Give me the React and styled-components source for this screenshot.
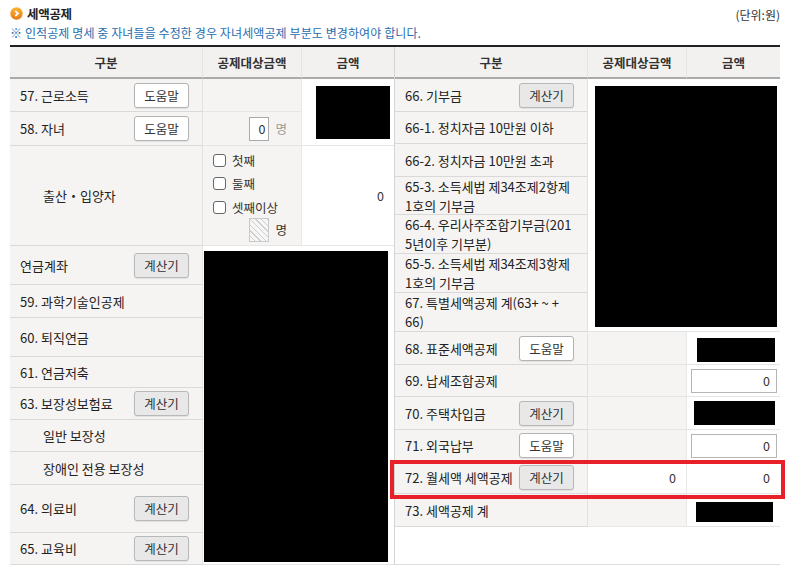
import styled, { createGlobalStyle } from "styled-components";

const GlobalStyle = createGlobalStyle`
  body {
    margin: 0;
    background: #fff;
    font-family: "Noto Sans CJK KR", "Noto Sans", sans-serif;
    color: #222;
  }
`;

const Page = styled.div`
  width: 789px;
  padding: 0 9px 0 10px;
  box-sizing: border-box;
`;

const TitleBar = styled.div`
  height: 26px;
  display: flex;
  align-items: center;
  justify-content: space-between;
`;

const Title = styled.h2`
  margin: 0;
  display: flex;
  align-items: center;
  gap: 4px;
  font-size: 12.5px;
  font-weight: 700;
  letter-spacing: -0.3px;
  color: #222;
`;

const Unit = styled.span`
  font-size: 12px;
  color: #333;
  padding-top: 2px;
`;

const Note = styled.p`
  margin: 0 0 5px;
  font-size: 12px;
  line-height: 14px;
  letter-spacing: 0.1px;
  color: #1f6db0;
`;

const Board = styled.div`
  display: flex;
  align-items: stretch;
  border-top: 2px solid #222;
`;

const Half = styled.div`
  display: grid;
  grid-template-columns: ${(p) => p.$cols};
  grid-template-rows: ${(p) => p.$rows};
  border-right: ${(p) => (p.$divider ? "1px solid #d4d4d4" : "none")};
`;

const HeadCell = styled.div`
  display: flex;
  align-items: center;
  justify-content: center;
  background: #f3f1ef;
  border-bottom: 2px solid #aaa;
  border-right: ${(p) => (p.$last ? "none" : "1px solid #e6e4e2")};
  font-size: 12.5px;
  font-weight: 700;
  color: #333;
  box-sizing: border-box;
`;

const LabelCell = styled.div`
  position: relative;
  display: flex;
  align-items: center;
  justify-content: space-between;
  padding: 0 13px 0 ${(p) => (p.$indent ? "33px" : "10px")};
  background: #f5f4f2;
  border-bottom: 1px solid #d9d9d9;
  border-right: 1px solid #e4e2e0;
  font-size: 13px;
  line-height: 19px;
  color: #222;
  box-sizing: border-box;
`;

const ValueCell = styled.div`
  display: flex;
  align-items: ${(p) => (p.$top ? "flex-start" : "center")};
  justify-content: ${(p) => p.$justify || "flex-end"};
  padding: ${(p) => p.$pad || "0 10px 0 0"};
  grid-row: span ${(p) => p.$rowSpan || 1};
  grid-column: span ${(p) => p.$colSpan || 1};
  background: ${(p) => (p.$tone === "gray" ? "#f5f4f2" : "#fff")};
  border-bottom: 1px solid #e6e6e6;
  border-right: ${(p) => (p.$last ? "none" : "1px solid #e8e8e8")};
  font-size: 12.5px;
  color: #333;
  box-sizing: border-box;
`;

const Filler = styled.div`
  grid-column: 1 / -1;
  background: #fff;
  border-bottom: 1px solid #dddddd;
`;

const Redacted = styled.div`
  width: ${(p) => p.$w}px;
  height: ${(p) => p.$h}px;
  background: #000;
  flex: none;
`;

const Btn = styled.button`
  width: 55px;
  height: 25px;
  flex: none;
  padding: 0;
  border: 1px solid ${(p) => (p.$calc ? "#b8b8b8" : "#b3b3b3")};
  border-radius: 3px;
  background: ${(p) => (p.$calc ? "#e8e8e8" : "#fff")};
  box-shadow: 0 1px 1px rgba(0, 0, 0, 0.08);
  font-family: inherit;
  font-size: 12.5px;
  color: #333;
`;

const InputGroup = styled.div`
  display: flex;
  align-items: center;
  gap: 6px;
  color: ${(p) => (p.$muted ? "#999" : "#333")};
  font-size: 12.5px;
`;

const SmallInput = styled.div`
  width: 20px;
  height: 24px;
  box-sizing: border-box;
  border: 1px solid ${(p) => (p.$disabled ? "#c9c9c9" : "#a9a9a9")};
  background: ${(p) =>
    p.$disabled
      ? "repeating-linear-gradient(45deg, #f6f6f6 0 3px, #cfcfcf 3px 4px)"
      : "#fff"};
  display: flex;
  align-items: center;
  justify-content: flex-end;
  padding-right: 3px;
  color: #333;
`;

const WideInput = styled.div`
  width: 86px;
  height: 24px;
  box-sizing: border-box;
  border: 1px solid #b5b5b5;
  background: #fff;
  display: flex;
  align-items: center;
  justify-content: flex-end;
  padding-right: 6px;
  font-size: 12.5px;
  color: #333;
`;

const BirthBox = styled.div`
  width: 100%;
  display: flex;
  flex-direction: column;
  padding-top: 3px;
`;

const CheckRow = styled.label`
  height: 23.3px;
  display: flex;
  align-items: center;
  gap: 6px;
  font-size: 12.5px;
  color: #333;
`;

const Check = styled.span`
  width: 13px;
  height: 13px;
  box-sizing: border-box;
  border: 1px solid #666;
  border-radius: 3px;
  background: #fff;
`;

const CountRow = styled.div`
  display: flex;
  justify-content: flex-end;
  margin-top: -1px;
  padding-right: 4px;
`;

const Highlight = styled.span`
  position: absolute;
  left: -5px;
  top: -2px;
  width: 395px;
  height: 39px;
  box-sizing: border-box;
  border: 4px solid #e8202a;
  z-index: 2;
  pointer-events: none;
`;

const Bullet = () => (
  <svg width="13" height="13" viewBox="0 0 13 13">
    <defs>
      <linearGradient id="bg" x1="0" y1="0" x2="0" y2="1">
        <stop offset="0" stopColor="#fbb336" />
        <stop offset="1" stopColor="#e97a12" />
      </linearGradient>
    </defs>
    <circle cx="6.5" cy="6.5" r="6.2" fill="url(#bg)" />
    <path d="M5.2 3.8 L8 6.5 L5.2 9.2" fill="none" stroke="#fff" strokeWidth="1.8" />
  </svg>
);

const leftRows = "32px 33px 34px 100px 39px 33px 39px 31px 32px 32px 33px 48px 32px";
const rightRows = "32px 33px 32px 33px 38px 39px 39px 39px 33px 32px 33px 32px 32px 33px 1fr";

function Label({ text, button, indent, children }) {
  return (
    <LabelCell $indent={indent}>
      <span>{text}</span>
      {button === "help" && <Btn>도움말</Btn>}
      {button === "calc" && <Btn $calc>계산기</Btn>}
      {children}
    </LabelCell>
  );
}

function Heads() {
  return (
    <>
      <HeadCell>구분</HeadCell>
      <HeadCell>공제대상금액</HeadCell>
      <HeadCell $last>금액</HeadCell>
    </>
  );
}

function LeftTable() {
  return (
    <Half $cols="193px 99px 92px" $rows={leftRows} $divider>
      <Heads />
      <Label text="57. 근로소득" button="help" />
      <ValueCell $tone="gray" />
      <ValueCell $rowSpan={2} $last $top $justify="flex-start" $pad="7px 0 0 14px">
        <Redacted $w={74} $h={53} />
      </ValueCell>

      <Label text="58. 자녀" button="help" />
      <ValueCell $tone="gray" $pad="0 14px 0 0">
        <InputGroup $muted>
          <SmallInput>0</SmallInput>명
        </InputGroup>
      </ValueCell>

      <Label text="출산・입양자" indent />
      <ValueCell $tone="gray" $top $justify="flex-start" $pad="0 10px 0 10px">
        <BirthBox>
          <CheckRow><Check />첫째</CheckRow>
          <CheckRow><Check />둘째</CheckRow>
          <CheckRow><Check />셋째이상</CheckRow>
          <CountRow>
            <InputGroup>
              <SmallInput $disabled />명
            </InputGroup>
          </CountRow>
        </BirthBox>
      </ValueCell>
      <ValueCell $last>0</ValueCell>

      <Label text="연금계좌" button="calc" />
      <ValueCell $rowSpan={9} $colSpan={2} $last $top $justify="flex-start" $pad="5px 0 0 1px">
        <Redacted $w={184} $h={311} />
      </ValueCell>
      <Label text="59. 과학기술인공제" />
      <Label text="60. 퇴직연금" />
      <Label text="61. 연금저축" />
      <Label text="63. 보장성보험료" button="calc" />
      <Label text="일반 보장성" indent />
      <Label text="장애인 전용 보장성" indent />
      <Label text="64. 의료비" button="calc" />
      <Label text="65. 교육비" button="calc" />
    </Half>
  );
}

function RightTable() {
  return (
    <Half $cols="193px 99px 93px" $rows={rightRows}>
      <Heads />
      <Label text="66. 기부금" button="calc" />
      <ValueCell $rowSpan={7} $colSpan={2} $last $top $justify="flex-start" $pad="7px 0 0 7px">
        <Redacted $w={182} $h={241} />
      </ValueCell>
      <Label text="66-1. 정치자금 10만원 이하" />
      <Label text="66-2. 정치자금 10만원 초과" />
      <Label text={<>65-3. 소득세법 제34조제2항제<br />1호의 기부금</>} />
      <Label text={<>66-4. 우리사주조합기부금(201<br />5년이후 기부분)</>} />
      <Label text={<>65-5. 소득세법 제34조제3항제<br />1호의 기부금</>} />
      <Label text={<>67. 특별세액공제 계(63+ ~ +<br />66)</>} />

      <Label text="68. 표준세액공제" button="help" />
      <ValueCell $tone="gray" />
      <ValueCell $last $top $justify="flex-start" $pad="6px 0 0 10px">
        <Redacted $w={78} $h={24} />
      </ValueCell>

      <Label text="69. 납세조합공제" />
      <ValueCell $tone="gray" />
      <ValueCell $last $justify="flex-start" $pad="0 0 0 4px">
        <WideInput>0</WideInput>
      </ValueCell>

      <Label text="70. 주택차입금" button="calc" />
      <ValueCell $tone="gray" />
      <ValueCell $last $top $justify="flex-start" $pad="4px 0 0 7px">
        <Redacted $w={81} $h={24} />
      </ValueCell>

      <Label text="71. 외국납부" button="help" />
      <ValueCell $tone="gray" />
      <ValueCell $last $justify="flex-start" $pad="0 0 0 4px">
        <WideInput>0</WideInput>
      </ValueCell>

      <Label text="72. 월세액 세액공제" button="calc">
        <Highlight />
      </Label>
      <ValueCell>0</ValueCell>
      <ValueCell $last>0</ValueCell>

      <Label text="73. 세액공제 계" />
      <ValueCell $tone="gray" />
      <ValueCell $last $top $justify="flex-start" $pad="8px 0 0 9px">
        <Redacted $w={77} $h={20} />
      </ValueCell>
      <Filler />
    </Half>
  );
}

export default function App() {
  return (
    <>
      <GlobalStyle />
      <Page>
        <TitleBar>
          <Title>
            <Bullet />
            세액공제
          </Title>
          <Unit>(단위:원)</Unit>
        </TitleBar>
        <Note>※ 인적공제 명세 중 자녀들을 수정한 경우 자녀세액공제 부분도 변경하여야 합니다.</Note>
        <Board>
          <LeftTable />
          <RightTable />
        </Board>
      </Page>
    </>
  );
}
